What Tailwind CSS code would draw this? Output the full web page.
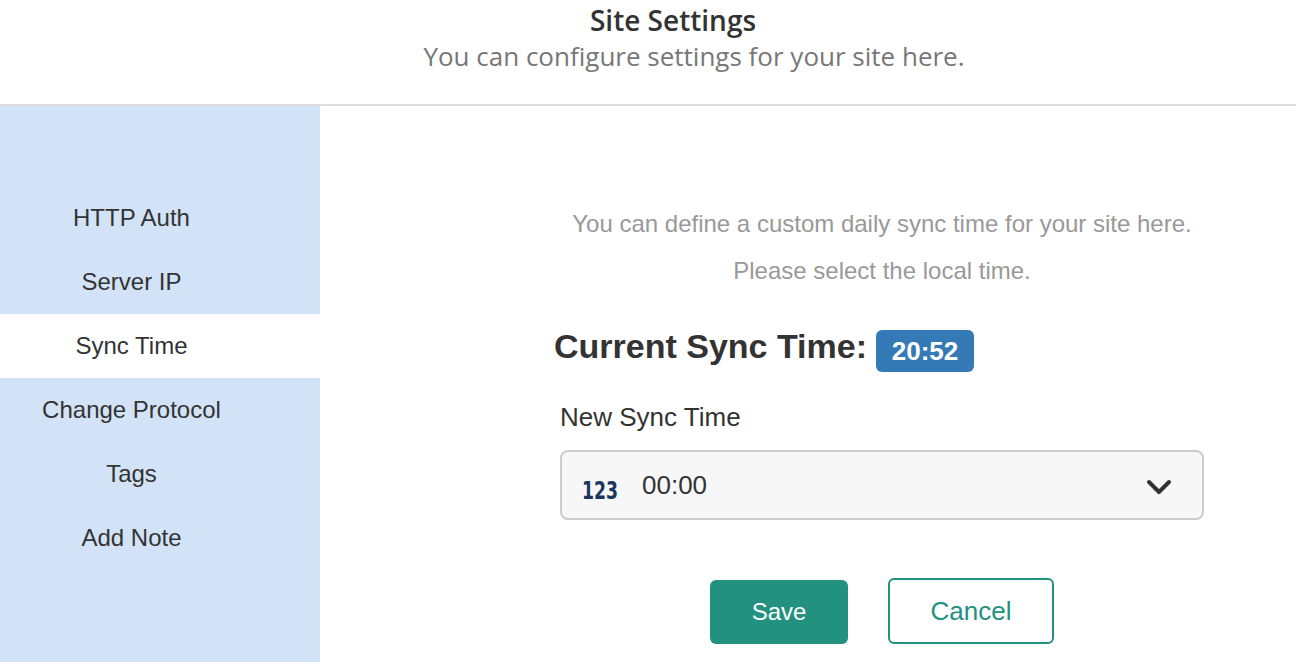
<!DOCTYPE html>
<html lang="en">
<head>
    <meta charset="UTF-8">
    <meta name="viewport" content="width=device-width, initial-scale=1.0">
    <title>Site Settings</title>
    <script src="https://cdn.jsdelivr.net/npm/@tailwindcss/browser@4"></script>
</head>
<body class="bg-white h-[662px] overflow-hidden font-['Liberation_Sans',sans-serif] text-[#333]">
    <header class="h-[106px] border-b-2 border-[#ddd] text-center font-['Open_Sans',sans-serif]">
        <h1 class="pt-[1px] pl-[50px] text-[28px] leading-[38px] font-semibold text-[#333]">Site Settings</h1>
        <p class="-mt-[1px] pl-[92px] text-[26px] leading-[36px] text-[#777]">You can configure settings for your site here.</p>
    </header>
    <div class="flex h-[556px]">
        <nav class="w-[320px] bg-[#d2e3f8] pt-[80px] text-center text-[24px] text-[#333]">
            <a class="flex h-[64px] items-center justify-center pr-[57px]">HTTP Auth</a>
            <a class="flex h-[64px] items-center justify-center pr-[57px]">Server IP</a>
            <a class="flex h-[64px] items-center justify-center pr-[57px] bg-white">Sync Time</a>
            <a class="flex h-[64px] items-center justify-center pr-[57px]">Change Protocol</a>
            <a class="flex h-[64px] items-center justify-center pr-[57px]">Tags</a>
            <a class="flex h-[64px] items-center justify-center pr-[57px]">Add Note</a>
        </nav>
        <main class="flex-1 flex flex-col items-center pl-[148px] pt-[94px]">
            <p class="text-[24px] leading-[47px] text-[#999] text-center">You can define a custom daily sync time for your site here.<br>Please select the local time.</p>
            <div class="w-[644px] mt-[29px]">
                <div class="flex items-center -ml-[6px] h-[46px]">
                    <h2 class="text-[34px] font-bold text-[#333]">Current Sync Time:</h2>
                    <span class="ml-[9px] mt-[10px] w-[98px] h-[42px] flex items-center justify-center rounded-[6px] bg-[#337ab7] text-white text-[26px] font-bold">20:52</span>
                </div>
                <label class="block mt-[32px] text-[26px] leading-[32px]">New Sync Time</label>
                <div class="mt-[17px] h-[70px] flex items-center rounded-[8px] border-2 border-[#ccc] bg-[#f7f7f7] pl-[20px] pr-[30px]">
                    <span class="block w-[38px] mt-[12px] text-[24px] leading-none font-bold text-[#1c3660] font-['DejaVu_Sans',sans-serif] origin-left scale-x-[0.72]">123</span>
                    <span class="ml-[22px] text-[26px]">00:00</span>
                    <svg class="ml-auto mt-[4px]" width="26" height="16" viewBox="0 0 26 16" fill="none" stroke="#333" stroke-width="4" stroke-linecap="round" stroke-linejoin="round"><path d="M3 3 L13 13 L23 3"/></svg>
                </div>
                <div class="mt-[58px] flex justify-center gap-[40px] items-center">
                    <button class="mt-[2px] w-[138px] h-[64px] rounded-[6px] bg-[#229180] text-white text-[24px]">Save</button>
                    <button class="w-[166px] h-[66px] rounded-[6px] border-2 border-[#229180] bg-white text-[#229180] text-[26px]">Cancel</button>
                </div>
            </div>
        </main>
    </div>
</body>
</html>
